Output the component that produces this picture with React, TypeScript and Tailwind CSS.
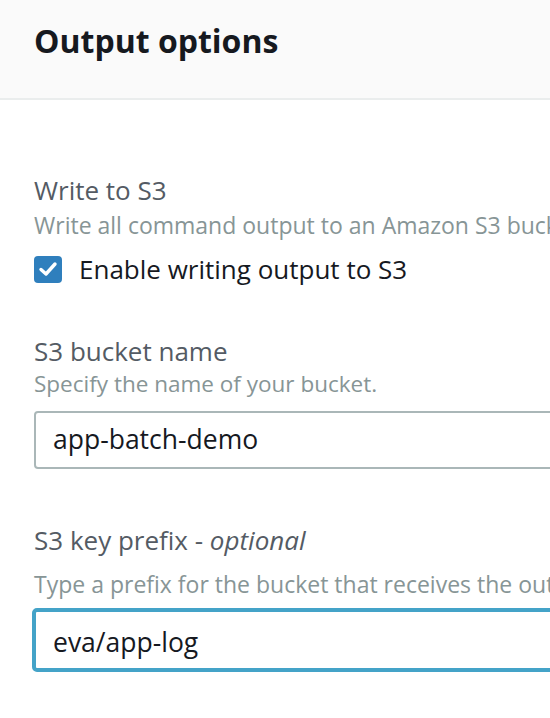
export default function App() {
  return (
    <div
      className="w-[550px] h-[718px] overflow-hidden bg-white"
      style={{ fontFamily: '"Open Sans", "Noto Sans", sans-serif' }}
    >
      <header className="h-[100px] bg-[#fafafa] border-b-2 border-[#eaeded] pl-[34px] pt-[19px]">
        <h2 className="text-[32px] leading-[44px] font-bold text-[#16191f] whitespace-nowrap">
          Output options
        </h2>
      </header>

      <div className="pl-[34px] pt-[72px]">
        <div>
          <div className="text-[26px] leading-[36px] text-[#545b64] whitespace-nowrap">Write to S3</div>
          <div className="mt-[2px] text-[23px] leading-[30px] text-[#879596] whitespace-nowrap">
            Write all command output to an Amazon S3 bucket.
          </div>
          <label className="flex items-center gap-[17px] mt-[11px] whitespace-nowrap">
            <span className="w-[28px] h-[27px] rounded-[4px] bg-[#2f7fbd] flex items-center justify-center shrink-0">
              <svg width="20" height="18" viewBox="0 0 20 18" fill="none">
                <path
                  d="M3 9.5 L8 14 L17 4"
                  stroke="white"
                  strokeWidth="3.4"
                  strokeLinecap="round"
                  strokeLinejoin="round"
                />
              </svg>
            </span>
            <span className="text-[26px] leading-[36px] text-[#16191f]">Enable writing output to S3</span>
          </label>
        </div>

        <div className="mt-[46px]">
          <div className="text-[26px] leading-[36px] text-[#545b64] whitespace-nowrap">S3 bucket name</div>
          <div className="text-[22.5px] leading-[30px] text-[#879596] whitespace-nowrap">
            Specify the name of your bucket.
          </div>
          <div className="mt-[12px] h-[58px] w-[560px] rounded-[4px] border-2 border-[#aab7b8] flex items-center pl-[17px]">
            <span className="text-[26.5px] text-[#16191f] whitespace-nowrap">app-batch-demo</span>
          </div>
        </div>

        <div className="mt-[53px]">
          <div className="text-[26px] leading-[36px] text-[#545b64] whitespace-nowrap">
            S3 key prefix - <i>optional</i>
          </div>
          <div className="mt-[11px] text-[23px] leading-[30px] text-[#879596] whitespace-nowrap">
            Type a prefix for the bucket that receives the output.
          </div>
          <div className="mt-[9px] -ml-[2px] h-[64px] w-[560px] rounded-[5px] border-[4px] border-[#44a3c8] flex items-center pl-[17px] pt-[5px]">
            <span className="text-[26.5px] text-[#16191f] whitespace-nowrap">eva/app-log</span>
          </div>
        </div>
      </div>
    </div>
  );
}
